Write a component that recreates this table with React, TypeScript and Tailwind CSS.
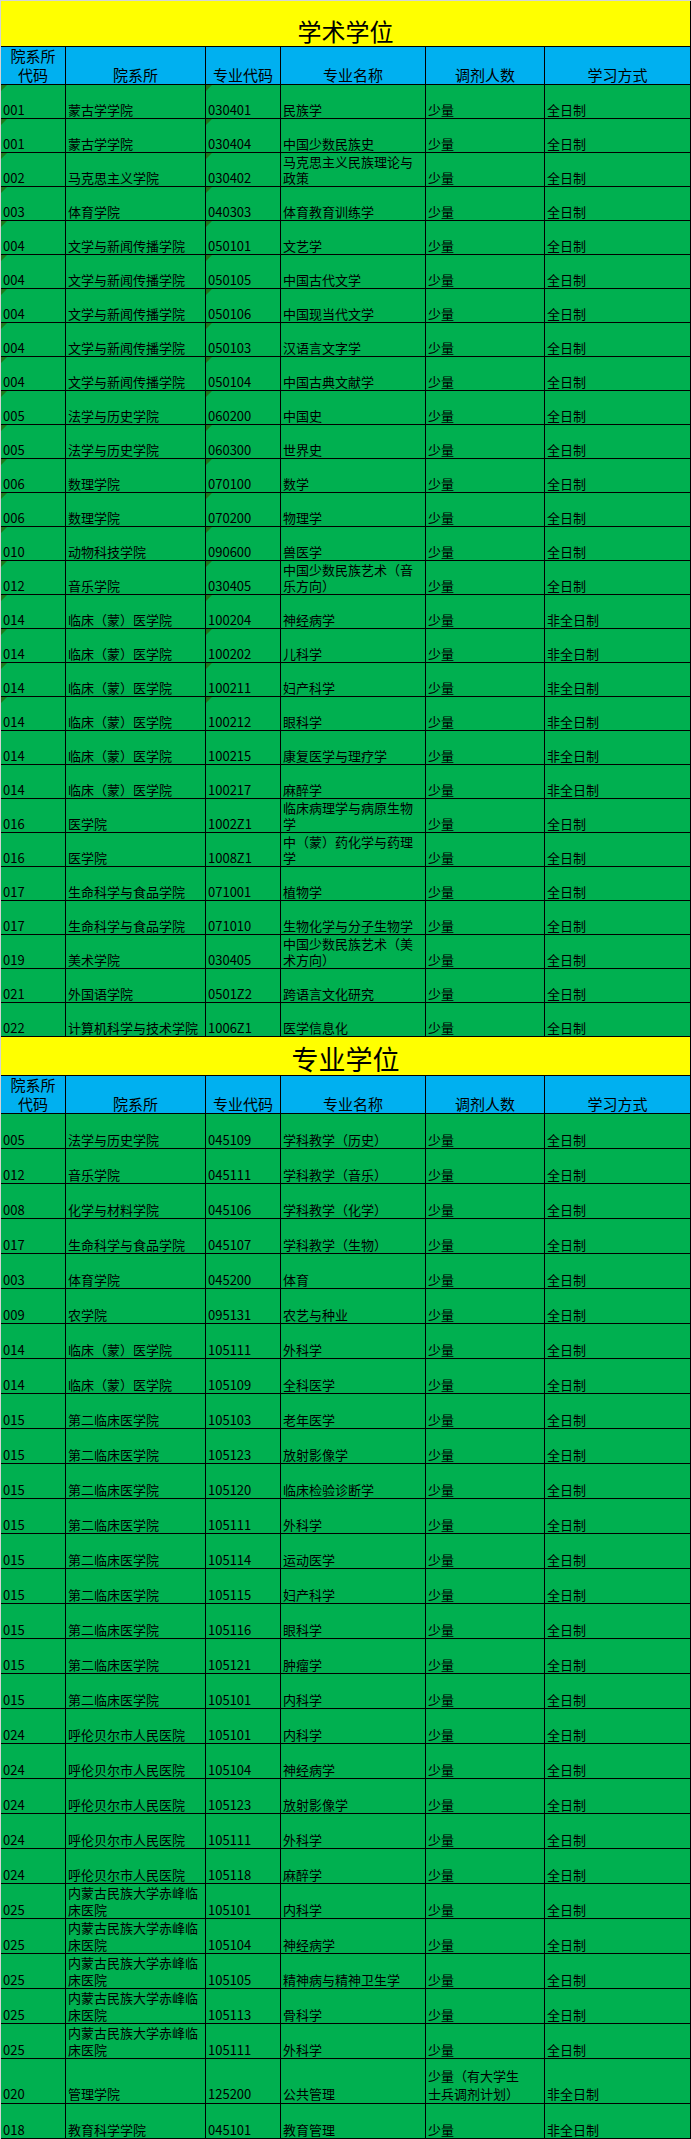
import React from 'react';

type Row = [string, string, string, string, string, string];

const cols = 'grid grid-cols-[65px_140px_75px_145px_119px_146px]';

const academic: Row[] = [
  ['001', '蒙古学学院', '030401', '民族学', '少量', '全日制'],
  ['001', '蒙古学学院', '030404', '中国少数民族史', '少量', '全日制'],
  ['002', '马克思主义学院', '030402', '马克思主义民族理论与\n政策', '少量', '全日制'],
  ['003', '体育学院', '040303', '体育教育训练学', '少量', '全日制'],
  ['004', '文学与新闻传播学院', '050101', '文艺学', '少量', '全日制'],
  ['004', '文学与新闻传播学院', '050105', '中国古代文学', '少量', '全日制'],
  ['004', '文学与新闻传播学院', '050106', '中国现当代文学', '少量', '全日制'],
  ['004', '文学与新闻传播学院', '050103', '汉语言文字学', '少量', '全日制'],
  ['004', '文学与新闻传播学院', '050104', '中国古典文献学', '少量', '全日制'],
  ['005', '法学与历史学院', '060200', '中国史', '少量', '全日制'],
  ['005', '法学与历史学院', '060300', '世界史', '少量', '全日制'],
  ['006', '数理学院', '070100', '数学', '少量', '全日制'],
  ['006', '数理学院', '070200', '物理学', '少量', '全日制'],
  ['010', '动物科技学院', '090600', '兽医学', '少量', '全日制'],
  ['012', '音乐学院', '030405', '中国少数民族艺术（音\n乐方向）', '少量', '全日制'],
  ['014', '临床（蒙）医学院', '100204', '神经病学', '少量', '非全日制'],
  ['014', '临床（蒙）医学院', '100202', '儿科学', '少量', '非全日制'],
  ['014', '临床（蒙）医学院', '100211', '妇产科学', '少量', '非全日制'],
  ['014', '临床（蒙）医学院', '100212', '眼科学', '少量', '非全日制'],
  ['014', '临床（蒙）医学院', '100215', '康复医学与理疗学', '少量', '非全日制'],
  ['014', '临床（蒙）医学院', '100217', '麻醉学', '少量', '非全日制'],
  ['016', '医学院', '1002Z1', '临床病理学与病原生物\n学', '少量', '全日制'],
  ['016', '医学院', '1008Z1', '中（蒙）药化学与药理\n学', '少量', '全日制'],
  ['017', '生命科学与食品学院', '071001', '植物学', '少量', '全日制'],
  ['017', '生命科学与食品学院', '071010', '生物化学与分子生物学', '少量', '全日制'],
  ['019', '美术学院', '030405', '中国少数民族艺术（美\n术方向）', '少量', '全日制'],
  ['021', '外国语学院', '0501Z2', '跨语言文化研究', '少量', '全日制'],
  ['022', '计算机科学与技术学院', '1006Z1', '医学信息化', '少量', '全日制'],
];

const professional: Row[] = [
  ['005', '法学与历史学院', '045109', '学科教学（历史）', '少量', '全日制'],
  ['012', '音乐学院', '045111', '学科教学（音乐）', '少量', '全日制'],
  ['008', '化学与材料学院', '045106', '学科教学（化学）', '少量', '全日制'],
  ['017', '生命科学与食品学院', '045107', '学科教学（生物）', '少量', '全日制'],
  ['003', '体育学院', '045200', '体育', '少量', '全日制'],
  ['009', '农学院', '095131', '农艺与种业', '少量', '全日制'],
  ['014', '临床（蒙）医学院', '105111', '外科学', '少量', '全日制'],
  ['014', '临床（蒙）医学院', '105109', '全科医学', '少量', '全日制'],
  ['015', '第二临床医学院', '105103', '老年医学', '少量', '全日制'],
  ['015', '第二临床医学院', '105123', '放射影像学', '少量', '全日制'],
  ['015', '第二临床医学院', '105120', '临床检验诊断学', '少量', '全日制'],
  ['015', '第二临床医学院', '105111', '外科学', '少量', '全日制'],
  ['015', '第二临床医学院', '105114', '运动医学', '少量', '全日制'],
  ['015', '第二临床医学院', '105115', '妇产科学', '少量', '全日制'],
  ['015', '第二临床医学院', '105116', '眼科学', '少量', '全日制'],
  ['015', '第二临床医学院', '105121', '肿瘤学', '少量', '全日制'],
  ['015', '第二临床医学院', '105101', '内科学', '少量', '全日制'],
  ['024', '呼伦贝尔市人民医院', '105101', '内科学', '少量', '全日制'],
  ['024', '呼伦贝尔市人民医院', '105104', '神经病学', '少量', '全日制'],
  ['024', '呼伦贝尔市人民医院', '105123', '放射影像学', '少量', '全日制'],
  ['024', '呼伦贝尔市人民医院', '105111', '外科学', '少量', '全日制'],
  ['024', '呼伦贝尔市人民医院', '105118', '麻醉学', '少量', '全日制'],
  ['025', '内蒙古民族大学赤峰临\n床医院', '105101', '内科学', '少量', '全日制'],
  ['025', '内蒙古民族大学赤峰临\n床医院', '105104', '神经病学', '少量', '全日制'],
  ['025', '内蒙古民族大学赤峰临\n床医院', '105105', '精神病与精神卫生学', '少量', '全日制'],
  ['025', '内蒙古民族大学赤峰临\n床医院', '105113', '骨科学', '少量', '全日制'],
  ['025', '内蒙古民族大学赤峰临\n床医院', '105111', '外科学', '少量', '全日制'],
  ['020', '管理学院', '125200', '公共管理', '少量（有大学生\n士兵调剂计划）', '非全日制'],
  ['018', '教育科学学院', '045101', '教育管理', '少量', '非全日制'],
];

const headers = ['院系所\n代码', '院系所', '专业代码', '专业名称', '调剂人数', '学习方式'];

// small green "number stored as text" marker Excel draws in the corner
const Marker = () => (
  <span className="absolute left-0 top-0 h-0 w-0 border-t-[6px] border-r-[6px] border-t-[#1d7a1d] border-r-transparent" />
);

const Section = ({
  title,
  titleClass,
  rows,
  rowClass,
  leading,
  markedRows,
}: {
  title: string;
  titleClass: string;
  rows: Row[];
  rowClass: (i: number) => string;
  leading: string;
  markedRows: number;
}) => (
  <div className={cols}>
    <div
      className={`col-span-6 flex items-end justify-center border-r border-b border-black bg-[#ffff00] ${titleClass}`}
    >
      {title}
    </div>
    {headers.map((h, i) => (
      <div
        key={h}
        className="flex h-[38px] items-end justify-center whitespace-pre-line border-r border-b border-black bg-[#00b0f0] text-center text-[15px] leading-[19px]"
      >
        {h}
      </div>
    ))}
    {rows.map((row, r) =>
      row.map((cell, c) => (
        <div
          key={`${r}-${c}`}
          className={`relative flex items-end overflow-hidden whitespace-pre-line border-r border-b border-black bg-[#00b050] pl-[2px] text-[13px] ${leading} ${rowClass(r)}`}
        >
          {r < markedRows && (c === 0 || c === 2) && <Marker />}
          <span>{cell}</span>
        </div>
      ))
    )}
  </div>
);

export default function App() {
  return (
    <div className="w-[691px] border-t border-l border-[#d4d4d4] bg-white font-['Noto_Sans_CJK_SC',sans-serif] text-black">
      <Section
        title="学术学位"
        titleClass="h-[46px] text-[24px] leading-[30px]"
        rows={academic}
        rowClass={() => 'h-[34px]'}
        leading="leading-[16px]"
        markedRows={19}
      />
      <Section
        title="专业学位"
        titleClass="h-[39px] text-[27px] leading-[33px]"
        rows={professional}
        rowClass={(i) => (i === 27 ? 'h-[45px] leading-[18px]' : 'h-[35px]')}
        leading="leading-[17px]"
        markedRows={0}
      />
    </div>
  );
}
